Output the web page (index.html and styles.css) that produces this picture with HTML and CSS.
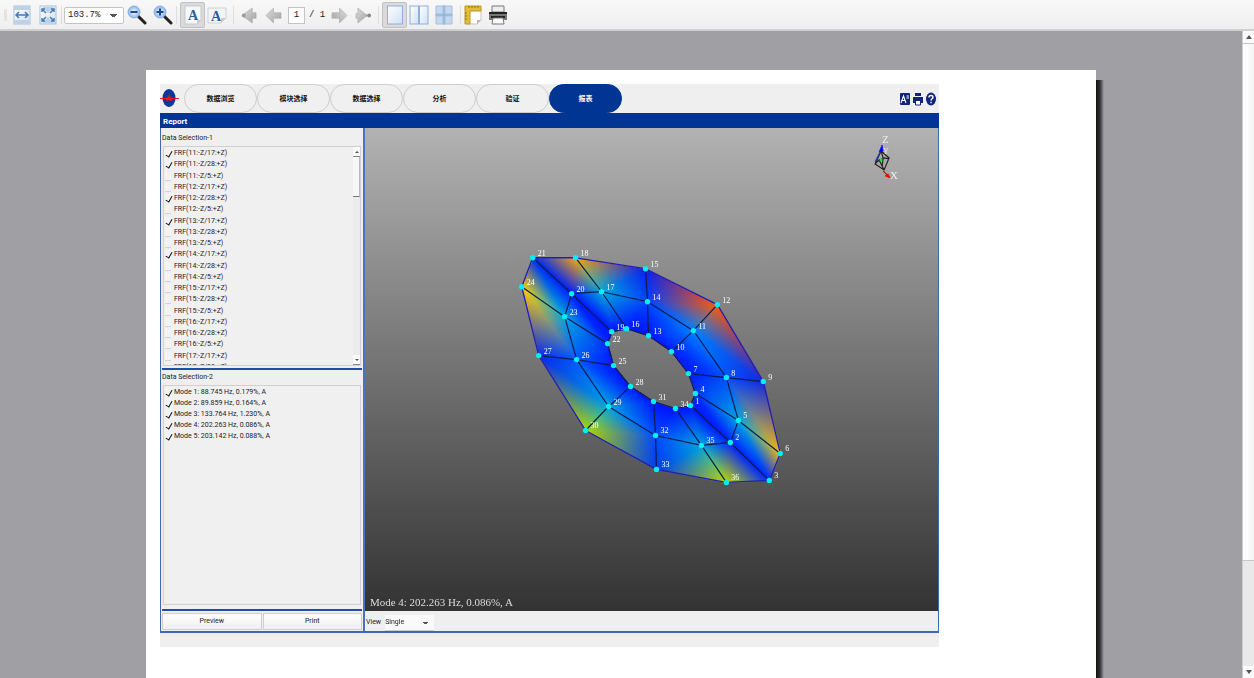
FILE: index.html
```html
<!DOCTYPE html>
<html lang="zh-CN">
<head>
<meta charset="utf-8">
<title>Report</title>
<link rel="stylesheet" href="styles.css">
</head>
<body>
<svg class="defs" aria-hidden="true">
  <defs>
    <linearGradient id="paper" x1="0" y1="0" x2="1" y2="1"><stop offset="0" stop-color="#fff"/><stop offset="1" stop-color="#cfe0f3"/></linearGradient>
    <linearGradient id="arrowFill" x1="0" y1="0" x2="1" y2="1"><stop offset="0" stop-color="#ddd"/><stop offset="1" stop-color="#a2a2a2"/></linearGradient>
    <radialGradient id="lens"><stop offset="0" stop-color="#fff"/><stop offset="1" stop-color="#84b2ec"/></radialGradient>
    <symbol id="arrow" viewBox="0 0 18 18"><path d="M1 9 9 1V6h8v6H9v5Z" fill="url(#arrowFill)" stroke="#aaa" stroke-width=".6"/></symbol>
  </defs>
</svg>

<header class="toolbar">
  <span class="grip"></span>
  <button class="tool" aria-label="Fit width"><svg viewBox="0 0 18 20"><rect x="1" y="1" width="16" height="18" fill="url(#paper)" stroke="#a9c0da"/><path d="M1 1h16v4H1zM1 15h16v4H1z" fill="#bdd1e8"/><path d="M3 10h12M6 7 3 10l3 3M12 7l3 3-3 3" fill="none" stroke="#4678b4" stroke-width="1.500"/></svg></button>
  <button class="tool tool-fit" aria-label="Fit page"><svg viewBox="0 0 18 20"><rect x="1" y="1" width="16" height="18" fill="url(#paper)" stroke="#a9c0da"/><path d="M9 8 3 2h12ZM9 12l-6 6h12Z" fill="#bdd1e8"/><path d="m3 4 4 4M15 4l-4 4M3 16l4-4M15 16l-4-4M3 7V4h3M12 4h3v3M3 13v3h3M12 16h3v-3" fill="none" stroke="#4678b4" stroke-width="1.400"/></svg></button>
  <span class="sep"></span>
  <select class="zoom" aria-label="Zoom"><option>103.7%</option></select>
  <button class="tool" aria-label="Zoom out"><svg viewBox="0 0 20 20"><path d="m11 11 7 7" stroke="#222" stroke-width="3" stroke-linecap="round"/><circle cx="7" cy="7" r="6" fill="url(#lens)" stroke="#8fb2df"/><path d="M3.500 7h7" stroke="#164a94" stroke-width="2"/></svg></button>
  <button class="tool tool-plus" aria-label="Zoom in"><svg viewBox="0 0 20 20"><path d="m11 11 7 7" stroke="#222" stroke-width="3" stroke-linecap="round"/><circle cx="7" cy="7" r="6" fill="url(#lens)" stroke="#8fb2df"/><path d="M3.500 7h7M7 3.500v7" stroke="#164a94" stroke-width="2"/></svg></button>
  <span class="sep"></span>
  <button class="tool pressed" aria-label="Portrait"><svg viewBox="0 0 18 20"><path d="M1 1h16v14l-4 4H1Z" fill="#f7f8f9" stroke="#c4c9cf"/><path d="M17 15h-4v4Z" fill="#ccc"/><text x="9" y="15" class="letter">A</text></svg></button>
  <button class="tool" aria-label="Landscape"><svg viewBox="0 0 18 20"><path d="M0 3h18v10l-5 5H0Z" fill="#f2f4f6" stroke="#ccd1d6"/><path d="M18 13h-5v5Z" fill="#ccc"/><text x="8" y="16" class="letter">A</text></svg></button>
  <span class="sep sep-wide"></span>
  <button class="tool nav" aria-label="First page"><svg viewBox="0 0 18 18"><path d="M1 9 12 1v5h4v6h-4v5Z" fill="url(#arrowFill)" stroke="#aaa" stroke-width=".6"/><circle cx="3" cy="9" r="2" fill="#999"/></svg></button>
  <button class="tool nav" aria-label="Previous page"><svg viewBox="0 0 18 18"><use href="#arrow"/></svg></button>
  <input class="page-no" aria-label="Page" value="1">
  <span class="page-count">/ 1</span>
  <button class="tool nav flip" aria-label="Next page"><svg viewBox="0 0 18 18"><use href="#arrow"/></svg></button>
  <button class="tool nav" aria-label="Last page"><svg viewBox="0 0 18 18"><path d="m3 1 10 8-10 8V12H1V7h2Z" fill="url(#arrowFill)" stroke="#aaa" stroke-width=".6"/><path d="M11 9h4" stroke="#aaa" stroke-width="2"/><circle cx="15" cy="9" r="2" fill="#888"/></svg></button>
  <span class="sep"></span>
  <button class="tool pressed" aria-label="Single page"><svg viewBox="0 0 18 20"><rect x="1.500" y="1" width="15" height="18" fill="url(#paper)" stroke="#8fb0d8"/></svg></button>
  <button class="tool" aria-label="Facing pages"><svg viewBox="0 0 20 20"><rect x="1" y="1" width="8.500" height="18" fill="url(#paper)" stroke="#8fb0d8"/><rect x="10.500" y="1" width="8.500" height="18" fill="url(#paper)" stroke="#8fb0d8"/></svg></button>
  <button class="tool tool-grid" aria-label="Overview"><svg viewBox="0 0 18 20"><g fill="#c5d8ef" stroke="#a5c0e0"><path d="M1 1h7v8H1zM10 1h7v8h-7zM1 11h7v8H1zM10 11h7v8h-7z"/></g><path d="M9 0v20M0 10h18" stroke="#6f9bd0"/></svg></button>
  <span class="sep"></span>
  <button class="tool tool-setup" aria-label="Page setup"><svg viewBox="0 0 18 20"><path d="M4 5h13v10l-4 4H4Z" fill="#fff" stroke="#c8c4b4"/><path d="M17 15h-4v4Z" fill="#bbb"/><path d="M1 1h16v5H6v13H1Z" fill="#e3bd35" stroke="#b99828"/><path d="M5 1v2M8 1v2M11 1v2M14 1v2M1 8h2M1 11h2M1 14h2" stroke="#8f711a"/></svg></button>
  <button class="tool" aria-label="Print"><svg viewBox="0 0 20 20"><path d="M4 1h12v6H4z" fill="#eee" stroke="#777"/><path d="M1 7h18v8H1z" fill="#777"/><path d="M1 8h18M3 12h14" stroke="#222" stroke-width="2"/><path d="M5 13h10l1 6H4Z" fill="#fafafa" stroke="#777"/></svg></button>
</header>

<main class="preview">
  <div class="canvas">
    <article class="sheet">
      <section class="app">
        <nav class="tabs">
          <svg class="logo" viewBox="0 0 24 28" aria-hidden="true"><ellipse cx="9" cy="14" rx="6.500" ry="9" fill="#07389a"/><path d="M0 14h6l1-1 1.500-.5L9 9l.8 3.500L11 13l1 1h7v1h-6l-1.500 2h-1L9 16l-1.500 1h-1L5 15H0Z" fill="#e8131d"/></svg>
          <button class="tab">数据浏览</button>
          <button class="tab">模块选择</button>
          <button class="tab">数据选择</button>
          <button class="tab">分析</button>
          <button class="tab">验证</button>
          <button class="tab active">报表</button>
          <div class="tab-tools">
            <button aria-label="Language"><svg viewBox="0 0 12 14"><rect x="1" y="1" width="10" height="12" rx="1" fill="#10237e"/><path d="m2 11 2.500-7L7 11M3 8.500h3M7.500 4H10M7.500 6H10" fill="none" stroke="#fff" stroke-width="1.100"/></svg></button>
            <button aria-label="Print report"><svg viewBox="0 0 12 14"><path d="M3 1h6v3H3zM1 5h10v6H9V9H3v2H1z" fill="#10237e"/><path d="M3.500 9v4h5V9" fill="#fff" stroke="#10237e"/></svg></button>
            <button aria-label="Help"><svg viewBox="0 0 12 14"><ellipse cx="6" cy="7" rx="5" ry="6.500" fill="#10237e"/><path d="M4 5.500Q4 3.500 6 3.500t2 1.800Q8 6.500 6.500 7.200L6 8.500M6 9.800v1.400" fill="none" stroke="#fff" stroke-width="1.400"/></svg></button>
          </div>
        </nav>
        <h1 class="title">Report</h1>
        <div class="work">
          <aside class="side">
            <h2>Data Selection-1</h2>
            <div class="box box-frf">
              <div class="rows rows-frf">
                <label><input type="checkbox" checked>FRF(11:-Z/17:+Z)</label>
                <label><input type="checkbox" checked>FRF(11:-Z/28:+Z)</label>
                <label><input type="checkbox">FRF(11:-Z/5:+Z)</label>
                <label><input type="checkbox">FRF(12:-Z/17:+Z)</label>
                <label><input type="checkbox" checked>FRF(12:-Z/28:+Z)</label>
                <label><input type="checkbox">FRF(12:-Z/5:+Z)</label>
                <label><input type="checkbox" checked>FRF(13:-Z/17:+Z)</label>
                <label><input type="checkbox">FRF(13:-Z/28:+Z)</label>
                <label><input type="checkbox">FRF(13:-Z/5:+Z)</label>
                <label><input type="checkbox" checked>FRF(14:-Z/17:+Z)</label>
                <label><input type="checkbox">FRF(14:-Z/28:+Z)</label>
                <label><input type="checkbox">FRF(14:-Z/5:+Z)</label>
                <label><input type="checkbox">FRF(15:-Z/17:+Z)</label>
                <label><input type="checkbox">FRF(15:-Z/28:+Z)</label>
                <label><input type="checkbox">FRF(15:-Z/5:+Z)</label>
                <label><input type="checkbox">FRF(16:-Z/17:+Z)</label>
                <label><input type="checkbox">FRF(16:-Z/28:+Z)</label>
                <label><input type="checkbox">FRF(16:-Z/5:+Z)</label>
                <label><input type="checkbox">FRF(17:-Z/17:+Z)</label>
                <label><input type="checkbox">FRF(17:-Z/28:+Z)</label>
              </div>
              <div class="mini-scroll"><span class="mini-up"></span><span class="mini-thumb"></span><span class="mini-down"></span></div>
            </div>
            <div class="splitter"></div>
            <h2>Data Selection-2</h2>
            <div class="box box-mode">
              <div class="rows">
                <label><input type="checkbox" checked>Mode 1: 88.745 Hz, 0.179%, A</label>
                <label><input type="checkbox" checked>Mode 2: 89.859 Hz, 0.164%, A</label>
                <label><input type="checkbox" checked>Mode 3: 133.764 Hz, 1.230%, A</label>
                <label><input type="checkbox" checked>Mode 4: 202.263 Hz, 0.086%, A</label>
                <label><input type="checkbox" checked>Mode 5: 203.142 Hz, 0.088%, A</label>
              </div>
            </div>
            <div class="splitter"></div>
            <div class="actions"><button>Preview</button><button>Print</button></div>
          </aside>
          <section class="view">
            <div class="scene">
              <canvas id="shade" width="574" height="484"></canvas>
              <svg id="mesh" viewBox="365 128 574 484" role="img" aria-label="Mode shape">
                <g id="edges"></g>
                <g id="nodes"></g>
                <g fill="none" stroke="#222" stroke-width="1.200">
                  <path d="m876 164 6-13 8 7-5 12ZM879 161l6-3 5 1M882 151l2 7-1 9M876 164l4-4 5 10"/>
                  <path d="m876 162 5-10" stroke="#2334d0"/>
                  <path d="m883 145-3 7 4-1Z" fill="#00f" stroke="#00f" stroke-width=".6"/>
                  <path d="m884 171 4 4" stroke="#a01818"/><path d="m886 176 5 2-2-4Z" fill="red" stroke="red" stroke-width=".8"/>
                  <circle cx="882" cy="160" r="1.500" fill="#1edc32" stroke="none"/>
                </g>
                <g class="axis"><text x="883" y="143">Z</text><text x="884" y="154" class="axis-y">Y</text><text x="891" y="179">X</text></g>
                <text x="370" y="607" class="caption">Mode 4: 202.263 Hz, 0.086%, A</text>
              </svg>
            </div>
            <div class="view-bar"><label for="layout">View</label><select id="layout"><option>Single</option></select></div>
          </section>
        </div>
        <div class="status"></div>
      </section>
    </article>
  </div>
  <div class="scrollbar"><button class="sb-up" aria-label="Scroll up"></button><span class="sb-thumb"></span><button class="sb-down" aria-label="Scroll down"></button></div>
</main>
<script src="mesh.js"></script>
</body>
</html>
```
FILE: styles.css
```css
* { box-sizing: border-box; }
html, body { height: 100%; }
body {
  margin: 0;
  display: flex;
  flex-direction: column;
  overflow: hidden;
  background: #a09fa4;
  font: 7px/11px Roboto, "Noto Sans CJK SC", sans-serif;
  color: #222;
}
button, input, select { font: inherit; color: inherit; margin: 0; padding: 0; }
button { border: 0; background: none; }
svg { display: block; }
.defs { position: absolute; width: 0; height: 0; }

.toolbar {
  flex: none;
  display: flex;
  align-items: center;
  height: 31px;
  padding: 1px 4px 0;
  background: linear-gradient(#f8f8f8, #efefef);
  border-bottom: 2px solid #cfcfd1;
  font: 9px/14px "Liberation Mono", monospace;
}
.grip { width: 3px; height: 12px; margin-right: 5px; background: #e4e4e4; }
.tool { width: 20px; height: 24px; margin-right: 1px; display: grid; place-items: center; }
.tool svg { width: 20px; height: 20px; }
.tool-fit { margin-left: 5px; }
.tool-plus { margin-left: 5px; }
.tool-grid { margin: 0 4px; }
.tool-setup { margin: 0 5px 0 0; }
.sep { width: 1px; height: 18px; margin: 0 2px; background: #dedede; }
.sep-wide { margin: 0 4px 0 5px; }
.pressed { width: 25px; height: 26px; margin: 0 2px 0 1px; background: #dadada; border: 1px solid #c2c2c2; border-radius: 2px; }
.letter { font: bold 14px "Liberation Serif", serif; fill: #2a5c9e; text-anchor: middle; }
.nav { margin: 0 3px 0 1px; }
.nav svg { width: 17px; height: 17px; }
.flip svg { transform: scaleX(-1); }
.zoom {
  width: 60px;
  height: 17px;
  padding-left: 3px;
  margin-right: 3px;
  appearance: none;
  border: 1px solid #c4c4c4;
  border-radius: 2px;
  background: linear-gradient(#555, #555) 45px 6px / 7px 1px no-repeat, linear-gradient(#555, #555) 46px 7px / 5px 1px no-repeat, linear-gradient(#555, #555) 47px 8px / 3px 1px no-repeat, #fff;
}
.page-no { width: 17px; height: 17px; margin-left: 2px; border: 1px solid #c4c4c4; background: #fff; text-align: center; }
.page-count { width: 23px; padding-left: 4px; }

.preview { flex: 1; min-height: 0; display: flex; }
.canvas { flex: 1; min-width: 0; padding: 39px 146px 0; display: flex; overflow: hidden; }
.sheet { position: relative; flex: 1; min-width: 0; padding: 14px; background: #fff; }
.sheet::after {
  content: "";
  position: absolute;
  left: 100%;
  top: 10px;
  bottom: 0;
  width: 8px;
  background: linear-gradient(90deg, #111, #333 50%, #a09fa4);
}
.scrollbar { width: 12px; display: flex; flex-direction: column; background: #e9e9e9; border-left: 1px solid #ccc; }
.scrollbar button { height: 12px; display: grid; place-items: center; background: #fafafa; }
.sb-up::before, .sb-down::before { content: ""; border: 3px solid transparent; }
.sb-up::before { border-top: 0; border-bottom: 4px solid #555; }
.sb-down::before { border-bottom: 0; border-top: 4px solid #555; }
.sb-thumb { flex: 0 0 80%; margin-bottom: auto; background: linear-gradient(90deg, #fff, #f4f4f4); border: solid #c6c6c6; border-width: 1px 0; }

.app { width: 779px; max-width: 100%; }
.tabs { display: flex; align-items: stretch; height: 29px; background: #efefef; }
.logo { width: 24px; height: 28px; }
.tab {
  width: 73px;
  padding-top: 2px;
  border: 1px solid #cdcdcd;
  border-radius: 18px;
  background: #f0f0f0;
  color: #111;
  font-weight: bold;
}
.tab.active { background: #003594; border-color: #003594; color: #fff; }
.tab-tools { margin-left: auto; display: flex; align-items: center; gap: 1px; padding-right: 2px; }
.tab-tools svg { width: 12px; height: 14px; }
.title { margin: 0; height: 15px; padding-left: 3px; background: #003594; color: #fff; font: bold 8px/17px Roboto, sans-serif; }

.work { display: flex; border: solid #3f67b5; border-width: 0 1px 2px; }
.side { width: 204px; display: flex; flex-direction: column; padding: 0 1px; background: #efefef; border-right: 2px solid #4a72bd; }
.side h2 { margin: 0; height: 18px; font: 7px/20px Roboto, sans-serif; }
.side .splitter + h2 { height: 15px; line-height: 14px; }
.box { display: flex; justify-content: space-between; overflow: hidden; margin: 0 1px; border: 1px solid #d0d0d0; background: #f0f0f0; }
.box-frf { height: 220px; margin-bottom: 2px; }
.box-mode { height: 220px; margin-bottom: 4px; }
.rows { display: grid; grid-auto-rows: 11px; align-content: start; padding: 1px; }
.rows-frf { height: 228px; grid-template-rows: repeat(20, 1fr); padding-bottom: 2px; }
.rows label { display: flex; align-items: center; gap: 3px; white-space: nowrap; }
.rows input { appearance: none; width: 6px; height: 9px; border-bottom: 1px solid #d2d2d2; background: #f3f3f3; }
.rows input:checked { border: 0; }
.rows input:checked::before { content: ""; display: block; width: 3px; height: 6px; margin: 1px 0 0 2px; border: solid #111; border-width: 0 1px 1px 0; transform: rotate(30deg); }
.mini-scroll { width: 7px; display: flex; flex-direction: column; background: #ececec; }
.mini-up, .mini-down { height: 10px; display: grid; place-items: center; border-bottom: 1px solid #888; background: #fafafa; }
.mini-up::before, .mini-down::before { content: ""; border: 2px solid transparent; }
.mini-up::before { border-top: 0; border-bottom-color: #555; }
.mini-down::before { border-bottom: 0; border-top-color: #555; }
.mini-thumb { height: 40px; margin-bottom: auto; background: #f7f7f7; border-right: 1px solid #bbb; border-bottom: 1px solid #777; }
.splitter { height: 2px; background: #1e4ea8; }
.actions { display: grid; grid-template-columns: 1fr 1fr; gap: 1px; padding: 2px 0 1px; }
.actions button { height: 17px; border: 1px solid #cfcfcf; background: linear-gradient(#fff, #efefef); }

.view { flex: 1; min-width: 0; display: flex; flex-direction: column; }
.scene { display: grid; overflow: hidden; background: linear-gradient(#b2b2b2, #333); }
.scene > * { grid-area: 1 / 1; width: 100%; height: auto; display: block; }
.lbl { font: 8px "Liberation Serif", serif; fill: #fff; }
.axis { font: 11px "Liberation Serif", serif; fill: #eee; }
.axis-y { font-size: 8px; }
.caption { font: 11px "Liberation Serif", serif; fill: #ddd; }
.view-bar { flex: 1; display: flex; align-items: center; gap: 4px; padding: 3px 0 0 1px; background: #efefef; }
.view-bar select {
  appearance: none;
  width: 49px;
  height: 16px;
  border: 0;
  border-bottom: 1px solid #ccc;
  background: linear-gradient(#555, #555) 38px 7px / 5px 1px no-repeat, linear-gradient(#555, #555) 39px 8px / 3px 1px no-repeat, #fafafa;
}
.status { height: 14px; background: #efefef; }
```
FILE: mesh.js
```js
// id: [x, y, [r, g, b]]
const N = {
  1: [691,406,[0,20,255]], 2: [731,443,[0,35,255]], 3: [770,481,[0,40,255]],
  4: [696,394,[0,50,255]], 5: [739,421,[0,165,225]], 6: [781,454,[245,185,10]],
  7: [689,374,[0,25,255]], 8: [727,378,[0,80,255]], 9: [764,382,[20,40,225]],
  10: [672,352,[0,25,255]], 11: [694,331,[0,130,255]], 12: [718,305,[255,90,5]],
  13: [649,336,[0,20,255]], 14: [648,302,[0,70,255]], 15: [646,269,[15,30,235]],
  16: [627,329,[0,20,255]], 17: [602,292,[0,170,220]], 18: [576,258,[245,165,10]],
  19: [612,332,[0,20,255]], 20: [572,294,[0,30,255]], 21: [533,258,[0,45,240]],
  22: [608,344,[0,40,255]], 23: [565,317,[0,165,225]], 24: [522,287,[255,205,0]],
  25: [614,366,[0,20,255]], 26: [577,360,[0,90,255]], 27: [539,356,[10,40,235]],
  28: [631,387,[0,25,255]], 29: [609,407,[0,165,225]], 30: [586,431,[175,215,0]],
  31: [654,402,[0,20,255]], 32: [656,436,[0,75,255]], 33: [657,470,[0,60,240]],
  34: [676,409,[0,20,255]], 35: [702,446,[0,165,220]], 36: [727,483,[190,215,0]]
};
const X0 = 365, Y0 = 128;
const canvas = document.getElementById("shade");
const ctx = canvas.getContext("2d");
const img = ctx.createImageData(canvas.width, canvas.height);

function tri(a, b, c) {
  const xs = [a[0], b[0], c[0]], ys = [a[1], b[1], c[1]];
  const d = (b[1] - c[1]) * (a[0] - c[0]) + (c[0] - b[0]) * (a[1] - c[1]);
  for (let y = Math.min(...ys); y <= Math.max(...ys); y++) {
    for (let x = Math.min(...xs); x <= Math.max(...xs); x++) {
      const u = ((b[1] - c[1]) * (x - c[0]) + (c[0] - b[0]) * (y - c[1])) / d;
      const v = ((c[1] - a[1]) * (x - c[0]) + (a[0] - c[0]) * (y - c[1])) / d;
      const w = 1 - u - v;
      if (u < 0 || v < 0 || w < 0) continue;
      const i = ((y - Y0) * canvas.width + x - X0) * 4;
      for (let k = 0; k < 3; k++) img.data[i + k] = u * a[2][k] + v * b[2][k] + w * c[2][k];
      img.data[i + 3] = 255;
    }
  }
}

let inner = "", outer = "", dots = "";
const line = (p, q) => `M${N[p][0]} ${N[p][1]}L${N[q][0]} ${N[q][1]}`;
for (let s = 0; s < 12; s++) {
  const i = s * 3 + 1, j = ((s + 1) % 12) * 3 + 1;
  for (let r = 0; r < 2; r++) {
    tri(N[i + r], N[i + r + 1], N[j + r]);
    tri(N[i + r + 1], N[j + r + 1], N[j + r]);
    inner += line(i + r, i + r + 1);
  }
  inner += line(i, j) + line(i + 1, j + 1);
  outer += line(i + 2, j + 2);
}
ctx.putImageData(img, 0, 0);
for (const id in N) {
  const [x, y] = N[id];
  dots += `<circle cx="${x}" cy="${y}" r="2.7" fill="#00f0f5"/><text class="lbl" x="${x + 5}" y="${y - 2}">${id}</text>`;
}
document.getElementById("edges").innerHTML =
  `<path d="${inner}" fill="none" stroke="#101c50" stroke-width="1.2"/>` +
  `<path d="${outer}" fill="none" stroke="#2020b4" stroke-width="1.3"/>`;
document.getElementById("nodes").innerHTML = dots;
```
